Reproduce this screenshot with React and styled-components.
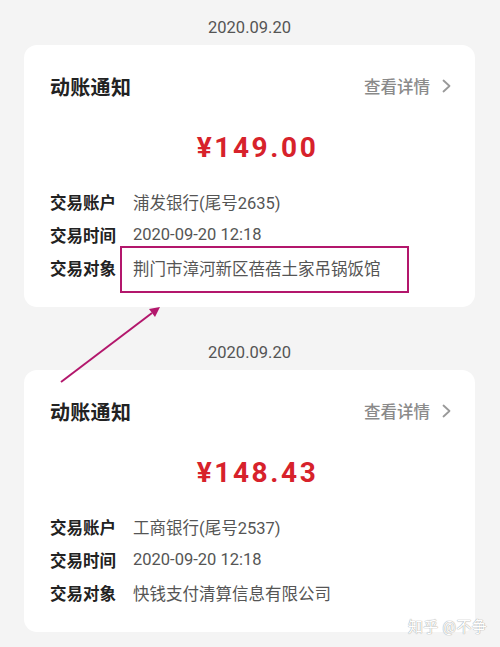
import React from 'react'
import styled, { createGlobalStyle } from 'styled-components'

const Global = createGlobalStyle`
  html, body {
    margin: 0;
    padding: 0;
    background: #f4f4f4;
  }
  body {
    font-family: Roboto, "Noto Sans CJK SC", "Noto Sans", sans-serif;
  }
`

const Styled = {
    Page: styled.div`
      position: relative;
      width: 500px;
      height: 647px;
      overflow: hidden;
      box-sizing: border-box;
      padding: 16px 25px 0 24px;
      display: flex;
      flex-direction: column;
      gap: 34px;
    `,
    Section: styled.div`
      display: flex;
      flex-direction: column;
      gap: 5px;
    `,
    Date: styled.div`
      text-align: center;
      font-size: 16.5px;
      line-height: 24px;
      color: #555555;
    `,
    Card: styled.div`
      background: #ffffff;
      border-radius: 13px;
      height: 262px;
      box-sizing: border-box;
      padding: 27px 24px 0 26px;
      display: flex;
      flex-direction: column;
    `,
    Head: styled.div`
      display: flex;
      align-items: center;
      justify-content: space-between;
      height: 28px;
    `,
    Title: styled.div`
      font-size: 20px;
      font-weight: 700;
      color: #222222;
      letter-spacing: 0.3px;
    `,
    More: styled.div`
      display: flex;
      align-items: center;
      gap: 12px;
      font-size: 16.5px;
      color: #8a8a8a;
      font-weight: 500;
    `,
    Amount: styled.div`
      margin-top: 28px;
      height: 40px;
      line-height: 40px;
      padding-left: 14px;
      text-align: center;
      font-size: 28px;
      font-weight: 700;
      color: #d7222b;
      letter-spacing: 2.6px;
    `,
    Rows: styled.div`
      margin-top: 17px;
      display: flex;
      flex-direction: column;
    `,
    Row: styled.div`
      display: flex;
      align-items: center;
      height: 33px;
    `,
    Label: styled.div`
      width: 83px;
      flex-shrink: 0;
      font-size: 16.5px;
      font-weight: 700;
      color: #222222;
    `,
    Value: styled.div`
      position: relative;
      font-size: 16.5px;
      color: #555555;
    `,
    Mark: styled.div`
      position: absolute;
      left: -13px;
      top: calc(50% - 22px);
      width: 289px;
      height: 47px;
      box-sizing: border-box;
      border: 2px solid #b3176c;
    `,
    Arrow: styled.svg`
      position: absolute;
      left: 0;
      top: 0;
      pointer-events: none;
    `,
    Watermark: styled.div`
      position: absolute;
      right: 13px;
      bottom: 11px;
      font-size: 15px;
      color: #ffffff;
      letter-spacing: 0.3px;
      text-shadow: 0 0 1px #a0a0a0, 0 0 1px #a0a0a0;
    `,
}

const Chevron = () => (
    <svg width="9" height="14" viewBox="0 0 9 14">
        <polyline points="1.5,1.5 7.5,7 1.5,12.5" fill="none" stroke="#999999" strokeWidth="1.8" strokeLinecap="round" strokeLinejoin="round" />
    </svg>
)

const notices = [
    {
        date: '2020.09.20',
        amount: '¥149.00',
        account: '浦发银行(尾号2635)',
        time: '2020-09-20 12:18',
        target: '荆门市漳河新区蓓蓓土家吊锅饭馆',
        marked: true,
    },
    {
        date: '2020.09.20',
        amount: '¥148.43',
        account: '工商银行(尾号2537)',
        time: '2020-09-20 12:18',
        target: '快钱支付清算信息有限公司',
        marked: false,
    },
]

const App = () => {
    return (
        <>
            <Global />
            <Styled.Page>
                {notices.map((n, i) => (
                    <Styled.Section key={i}>
                        <Styled.Date>{n.date}</Styled.Date>
                        <Styled.Card>
                            <Styled.Head>
                                <Styled.Title>动账通知</Styled.Title>
                                <Styled.More>
                                    查看详情
                                    <Chevron />
                                </Styled.More>
                            </Styled.Head>
                            <Styled.Amount>{n.amount}</Styled.Amount>
                            <Styled.Rows>
                                <Styled.Row>
                                    <Styled.Label>交易账户</Styled.Label>
                                    <Styled.Value>{n.account}</Styled.Value>
                                </Styled.Row>
                                <Styled.Row>
                                    <Styled.Label>交易时间</Styled.Label>
                                    <Styled.Value>{n.time}</Styled.Value>
                                </Styled.Row>
                                <Styled.Row>
                                    <Styled.Label>交易对象</Styled.Label>
                                    <Styled.Value>
                                        {n.target}
                                        {n.marked && <Styled.Mark />}
                                    </Styled.Value>
                                </Styled.Row>
                            </Styled.Rows>
                        </Styled.Card>
                    </Styled.Section>
                ))}
                <Styled.Arrow width="500" height="647" viewBox="0 0 500 647">
                    <line x1="61" y1="382" x2="152" y2="313" stroke="#b3176c" strokeWidth="2" />
                    <polygon points="160,307 149,309 155,317" fill="#b3176c" />
                </Styled.Arrow>
                <Styled.Watermark>知乎 @不争</Styled.Watermark>
            </Styled.Page>
        </>
    )
}

export default App
